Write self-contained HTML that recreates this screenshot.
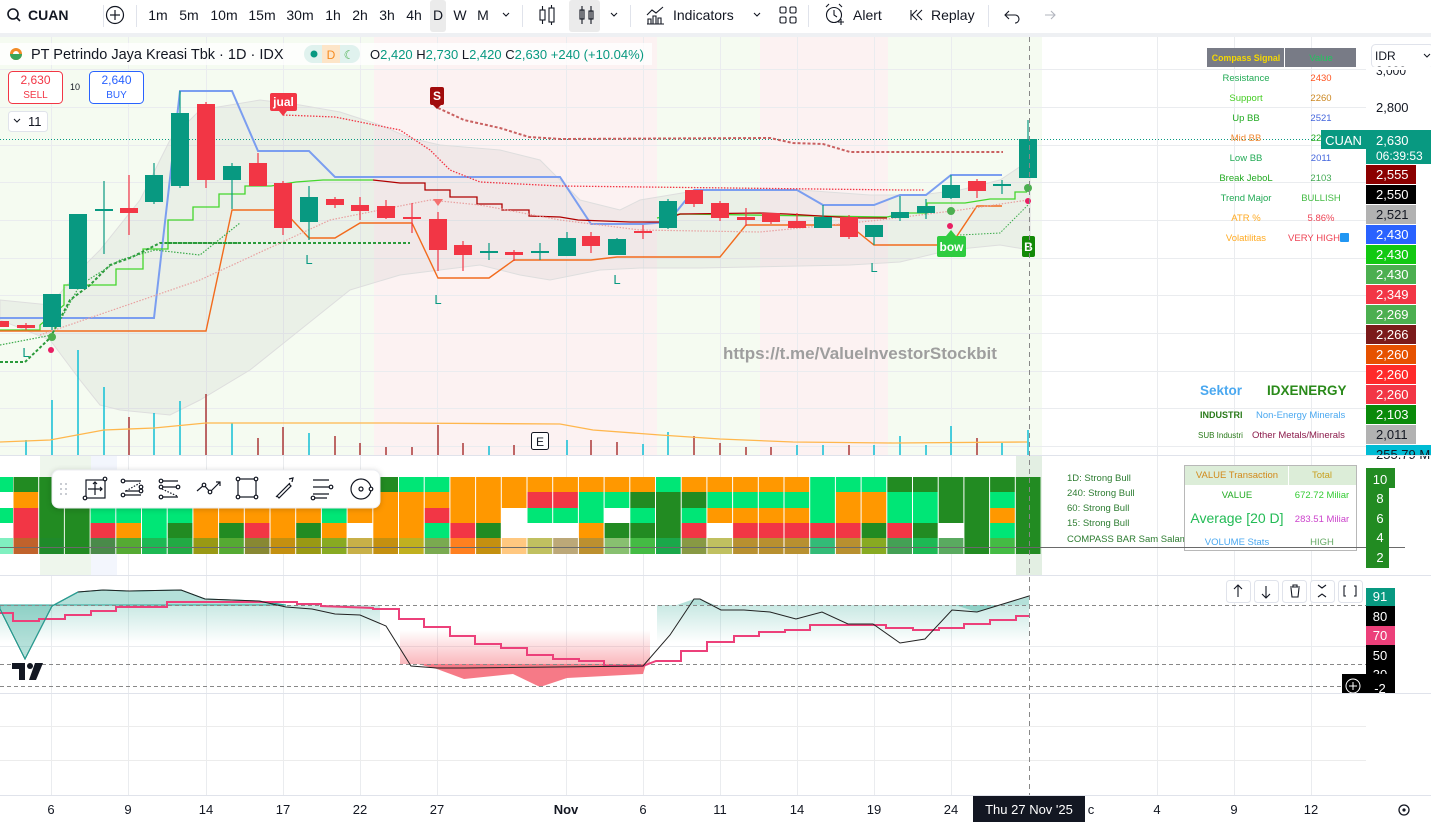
<!DOCTYPE html>
<html><head><meta charset="utf-8"><style>
*{margin:0;padding:0;box-sizing:border-box}
body{width:1431px;height:822px;overflow:hidden;background:#fff;font-family:"Liberation Sans",sans-serif;position:relative}
svg{position:absolute;left:0;top:0}
text{font-family:"Liberation Sans",sans-serif}
</style></head><body>
<svg id="s" width="1431" height="822" viewBox="0 0 1431 822" xmlns="http://www.w3.org/2000/svg">
<defs>
<linearGradient id="tg" x1="0" y1="0" x2="0" y2="1"><stop offset="0" stop-color="#089981" stop-opacity=".22"/><stop offset="1" stop-color="#089981" stop-opacity="0"/></linearGradient>
<linearGradient id="rg" x1="0" y1="1" x2="0" y2="0"><stop offset="0" stop-color="#f23645" stop-opacity=".35"/><stop offset="1" stop-color="#f23645" stop-opacity="0"/></linearGradient>
</defs>
<rect x="0" y="0" width="1431" height="33" fill="#fff"/>
<rect x="0" y="33" width="1431" height="4" fill="#eef0f3"/>
<g fill="none" stroke="#131722" stroke-width="1.6">
<circle cx="13" cy="14" r="5"/><line x1="16.5" y1="17.5" x2="20" y2="21"/>
<circle cx="115" cy="15" r="8.5" stroke-width="1.2"/><line x1="115" y1="10" x2="115" y2="20" stroke-width="1.2"/><line x1="110" y1="15" x2="120" y2="15" stroke-width="1.2"/>
</g>
<text x="28" y="20" font-size="14" font-weight="bold" fill="#131722">CUAN</text>
<g stroke="#e0e3eb"><line x1="103.5" y1="5" x2="103.5" y2="27"/><line x1="136.5" y1="5" x2="136.5" y2="27"/><line x1="522.5" y1="5" x2="522.5" y2="27"/><line x1="630.5" y1="5" x2="630.5" y2="27"/><line x1="808.5" y1="5" x2="808.5" y2="27"/><line x1="988.5" y1="5" x2="988.5" y2="27"/></g>
<rect x="430" y="0" width="16" height="32" rx="3" fill="#ebebeb"/>
<rect x="569" y="0" width="31" height="32" rx="3" fill="#ebebeb"/>
<g font-size="14" fill="#131722" text-anchor="middle">
<text x="158" y="20">1m</text><text x="189" y="20">5m</text><text x="224" y="20">10m</text><text x="262" y="20">15m</text><text x="300" y="20">30m</text><text x="333" y="20">1h</text><text x="360" y="20">2h</text><text x="387" y="20">3h</text><text x="414" y="20">4h</text><text x="438" y="20">D</text><text x="460" y="20">W</text><text x="483" y="20">M</text>
</g>
<g fill="none" stroke="#131722" stroke-width="1.1">
<path d="M503 13l3 3 3-3M611 13l3 3 3-3M754 13l3 3 3-3"/>
<rect x="540" y="10" width="5" height="10"/><line x1="542.5" y1="6" x2="542.5" y2="10"/><line x1="542.5" y1="20" x2="542.5" y2="24"/>
<rect x="549" y="8" width="5" height="14"/><line x1="551.5" y1="5" x2="551.5" y2="8"/><line x1="551.5" y1="22" x2="551.5" y2="25"/>
<rect x="580" y="10" width="4" height="9"/><line x1="582" y1="6" x2="582" y2="24"/><rect x="589" y="11" width="4" height="8"/><line x1="591" y1="6" x2="591" y2="24"/>
<path d="M647 24h17M648 24v-5h3v5M653 24v-8h3v8M658 24v-6h3v6M647 15l5-5 4 3 7-6"/>
<rect x="780" y="7" width="6" height="6" rx="1.5"/><rect x="790" y="7" width="6" height="6" rx="1.5"/><rect x="780" y="17" width="6" height="6" rx="1.5"/><rect x="790" y="17" width="6" height="6" rx="1.5"/>
<circle cx="834" cy="15" r="7.5"/><path d="M834 10v5l3 2M826 7l3-3M842 7l-3-3M838 22h6M841 19v6"/>
<path d="M917 10l-5 5 5 5M922 10l-5 5 5 5M911 10v10"/>
<path d="M1005 15h10a4 4 0 0 1 0 8M1009 11l-4 4 4 4"/>
</g>
<path d="M1055 15h-10M1051 11l4 4-4 4" fill="none" stroke="#b2b5be" stroke-width="1.1"/>
<g font-size="14" fill="#131722"><text x="673" y="20">Indicators</text><text x="853" y="20">Alert</text><text x="931" y="20">Replay</text></g>

<rect x="0" y="37" width="374" height="418" fill="#f5fbf1"/>
<rect x="374" y="37" width="283" height="418" fill="#fcf2f2"/>
<rect x="657" y="37" width="103" height="418" fill="#f5fbf1"/>
<rect x="760" y="37" width="128" height="418" fill="#fcf2f2"/>
<rect x="888" y="37" width="154" height="418" fill="#f5fbf1"/>
<g id="grid" stroke="#eaecef" stroke-width="1"></g>
<path d="M0 300L50 305 80 270 100 250 140 200 170 140 200 110 260 100 300 105 340 112 380 125 410 138 440 145 500 150 540 160 580 200 620 210 640 200 700 190 800 190 870 195 920 195 960 190 1000 180 1030 160L1030 250 1000 245 950 250 900 262 850 265 800 266 700 268 640 268 600 270 550 280 520 275 480 265 440 270 400 275 350 290 300 330 250 370 200 400 170 415 120 410 100 405 80 380 50 340 0 320Z" fill="rgba(120,120,120,.08)" stroke="#dedede"/>
<line x1="0" y1="139.5" x2="1320" y2="139.5" stroke="#089981" stroke-dasharray="1 2"/>
<g id="vol" stroke-width="1.4"></g>
<polyline points="0,442 50,440 104,430 154,428 206,423 286,423 393,423 560,424 593,430 660,435 720,439 793,442 893,443 1027,442" fill="none" stroke="#ffb74d" stroke-width="1.3"/>
<polyline points="0,318 154,318 180,91 232,91 258,151 309,151 335,177 560,177 591,224 643,224 668,222 694,190 797,190 823,205 874,205 900,195 926,195 951,175 1002,175" fill="none" stroke="#7b9ef0" stroke-width="2"/>
<polyline points="0,330 40,330 40,325 64,305 64,285 89,285 116,285 116,269 143,269 143,249 168,249 168,220 193,220 193,207 219,207 219,194 245,194 245,186 271,186 296,182 323,180 373,180" fill="none" stroke="#44d62c" stroke-width="1.3"/>
<polyline points="657,218 680,214 887,217 907,213 927,213 927,203 965,203 990,199 1015,199 1015,192 1027,192" fill="none" stroke="#44d62c" stroke-width="1.3"/>
<polyline points="373,180 400,183 425,183 425,190 450,190 450,197 477,197 477,204 502,204 502,210 529,210 529,216 560,217 578,220 630,222 660,222 680,214 760,213 787,214 837,217 860,218 887,218" fill="none" stroke="#b00000" stroke-width="1.3"/>
<polyline points="0,331 206,331 232,210 283,210 309,238 335,238 360,223 412,223 438,278 489,278 514,260 591,260 617,257 720,257 746,225 849,225 874,245 951,245 977,206 1002,206" fill="none" stroke="#f26b1d" stroke-width="1.4"/>
<polyline points="283,115 335,117 400,130 430,150 450,170 480,182 560,186 900,190 924,190" fill="none" stroke="#f23645" stroke-dasharray="1.5 1.5" stroke-width="1.3"/>
<polyline points="438,108 464,120 500,128 529,137 560,139 770,138 793,143 823,144 850,152 1003,152" fill="none" stroke="#c96060" stroke-dasharray="3 2" stroke-width="2"/>
<polyline points="0,362 25,362 50,338 70,300 90,285 110,265 130,258 160,243 240,243" fill="none" stroke="#2a9a3a" stroke-dasharray="3 2" stroke-width="2"/>
<polyline points="168,243 410,243" fill="none" stroke="#2a9a3a" stroke-dasharray="3 2" stroke-width="2"/>
<polyline points="0,345 52,335 80,285 120,260 155,250 200,255 240,223" fill="none" stroke="#3aaa4a" stroke-dasharray="1.5 1.5" stroke-width="1.2"/>
<polyline points="40,335 200,280 330,220 430,200 480,205 560,220 640,230 760,232 880,220 960,210 1028,200" fill="none" stroke="#e8a0a0" stroke-dasharray="1.5 1.5" stroke-width="1.2"/>
<polyline points="960,235 1000,233 1028,205" fill="none" stroke="#3aaa4a" stroke-dasharray="1.5 1.5"/>
<g id="cdl"></g>
<circle cx="1028" cy="188" r="4" fill="#4caf50"/><circle cx="951" cy="211" r="4" fill="#4caf50"/><circle cx="52" cy="337" r="4" fill="#4caf50"/>
<rect x="270" y="93" width="27" height="18" rx="2" fill="#f23645"/><path d="M279 111l4 5 4-5z" fill="#f23645"/><text x="283.5" y="106" font-size="12" font-weight="bold" fill="#fff" text-anchor="middle">jual</text>
<rect x="430" y="87" width="14" height="18" rx="2" fill="#a10c0c"/><path d="M433 105l4 4 4-4z" fill="#a10c0c"/><text x="437" y="100" font-size="12" font-weight="bold" fill="#fff" text-anchor="middle">S</text>
<path d="M433 199h10l-5 7z" fill="#f47070"/>
<rect x="937" y="236" width="29" height="21" rx="2" fill="#2ecc40"/><path d="M946 236l5-6 5 6z" fill="#2ecc40"/><text x="951.5" y="251" font-size="12" font-weight="bold" fill="#fff" text-anchor="middle">bow</text>
<rect x="1022" y="236" width="13" height="21" rx="2" fill="#138a07"/><text x="1028.5" y="251" font-size="12" font-weight="bold" fill="#fff" text-anchor="middle">B</text>
<g font-size="13" fill="#089981" text-anchor="middle"><text x="26" y="357">L</text><text x="309" y="264">L</text><text x="438" y="304">L</text><text x="617" y="284">L</text><text x="874" y="272">L</text></g>
<g fill="#e91e63"><circle cx="51" cy="350" r="3"/><circle cx="950" cy="226" r="3"/><circle cx="1028" cy="201" r="3"/></g>
<rect x="531.5" y="432.5" width="17" height="17" rx="2" fill="#fff" stroke="#131722"/><text x="540" y="446" font-size="12" fill="#131722" text-anchor="middle">E</text>
<text x="723" y="359" font-size="17" font-weight="bold" fill="#9e9e9e">https://t.me/ValueInvestorStockbit</text>
<rect x="0" y="43" width="652" height="22" fill="rgba(255,255,255,.75)"/>
<circle cx="16" cy="54" r="6" fill="#f28b27"/><circle cx="16" cy="54" r="3" fill="#fff"/><path d="M10 54a6 6 0 0 0 12 0" fill="#3aa55a"/>
<text x="31" y="59" font-size="14.5" fill="#131722">PT Petrindo Jaya Kreasi Tbk · 1D · IDX</text>
<rect x="304" y="45" width="56" height="18" rx="9" fill="#e0f2ee"/><rect x="322" y="45" width="18" height="18" fill="#fde5c8"/>
<circle cx="314" cy="54" r="3.5" fill="#089981"/><text x="331" y="59" font-size="12" fill="#f58a1f" text-anchor="middle">D</text><text x="349" y="59" font-size="12" fill="#4caf50" text-anchor="middle">☾</text>
<text x="370" y="59" font-size="13" fill="#089981"><tspan fill="#131722">O</tspan>2,420 <tspan fill="#131722">H</tspan>2,730 <tspan fill="#131722">L</tspan>2,420 <tspan fill="#131722">C</tspan>2,630 +240 (+10.04%)</text>
<rect x="8.5" y="71.5" width="54" height="32" rx="4" fill="#fff" stroke="#f23645"/><text x="35.5" y="84" font-size="12" fill="#f23645" text-anchor="middle">2,630</text><text x="35.5" y="98" font-size="10" fill="#f23645" text-anchor="middle">SELL</text>
<text x="75" y="90" font-size="9" fill="#131722" text-anchor="middle">10</text>
<rect x="89.5" y="71.5" width="54" height="32" rx="4" fill="#fff" stroke="#2962ff"/><text x="116.5" y="84" font-size="12" fill="#2962ff" text-anchor="middle">2,640</text><text x="116.5" y="98" font-size="10" fill="#2962ff" text-anchor="middle">BUY</text>
<rect x="8.5" y="111.5" width="39" height="20" rx="3" fill="#fff" stroke="#e0e3eb"/><path d="M14 119l3 3 3-3" fill="none" stroke="#131722"/><text x="28" y="126" font-size="13" fill="#131722">11</text>
<rect x="1207" y="48" width="77" height="19" fill="#787b86"/><rect x="1285" y="48" width="71" height="19" fill="#787b86"/>
<text x="1246" y="61" font-size="8.8" fill="#f5d800" text-anchor="middle" font-weight="bold">Compass Signal</text><text x="1321" y="61" font-size="9.5" fill="#22c55e" text-anchor="middle">Value</text>
<g font-size="9.5" text-anchor="middle">
<text x="1246" y="81" fill="#22aa55">Resistance</text><text x="1321" y="81" fill="#ff5522">2430</text>
<text x="1246" y="101" fill="#44cc22">Support</text><text x="1321" y="101" fill="#cc8822">2260</text>
<text x="1246" y="121" fill="#22aa22">Up BB</text><text x="1321" y="121" fill="#4466dd">2521</text>
<text x="1246" y="141" fill="#ee8833">Mid BB</text><text x="1316" y="141" fill="#22aa22">22</text>
<text x="1246" y="161" fill="#22aa55">Low BB</text><text x="1321" y="161" fill="#4466dd">2011</text>
<text x="1246" y="181" fill="#22aa22">Break JeboL</text><text x="1321" y="181" fill="#44aa55">2103</text>
<text x="1246" y="201" fill="#22aa55">Trend Major</text><text x="1321" y="201" fill="#44bb44">BULLISH</text>
<text x="1246" y="221" fill="#ffaa22">ATR %</text><text x="1321" y="221" fill="#ee4455">5.86%</text>
<text x="1246" y="241" fill="#ffaa22">Volatilitas</text><text x="1314" y="241" fill="#ee4455">VERY HIGH</text>
</g>
<rect x="1340" y="233" width="9" height="9" rx="1" fill="#2196f3"/>
<text x="1200" y="395" font-size="13.5" font-weight="bold" fill="#4aa8f0">Sektor</text>
<text x="1267" y="395" font-size="13.5" font-weight="bold" fill="#2a8a1a">IDXENERGY</text>
<text x="1200" y="418" font-size="9" font-weight="bold" fill="#2a7a1a">INDUSTRI</text><text x="1256" y="418" font-size="9.5" fill="#4aa8f0">Non-Energy Minerals</text>
<text x="1198" y="438" font-size="8" fill="#2a7a1a">SUB Industri</text><text x="1252" y="438" font-size="9.5" fill="#8b1a4a">Other Metals/Minerals</text>
<rect x="1366" y="37" width="65" height="418" fill="#fff"/>
<rect x="1371.5" y="44.5" width="62" height="23" rx="4" fill="#fff" stroke="#e0e3eb"/><text x="1375" y="60" font-size="12" fill="#131722">IDR</text><path d="M1424 54l3 3 3-3" fill="none" stroke="#131722"/>
<text x="1376" y="75" font-size="12" fill="#131722">3,000</text>
<rect x="1366" y="67" width="65" height="3" fill="#fff"/>
<text x="1376" y="112" font-size="13" fill="#131722">2,800</text>
<rect x="1321" y="130" width="45" height="19" fill="#089981"/><text x="1343.5" y="145" font-size="13" fill="#fff" text-anchor="middle">CUAN</text>
<rect x="1366" y="130" width="65" height="34" fill="#089981"/><text x="1376" y="145" font-size="13" fill="#fff">2,630</text><text x="1376" y="160" font-size="12" fill="#fff">06:39:53</text>
<g id="pl" font-size="13"></g>
<line x1="0" y1="455.5" x2="1431" y2="455.5" stroke="#e0e3eb"/>
<rect x="1016" y="456" width="26" height="119" fill="#e3efe3"/>
<rect x="40" y="456" width="51" height="119" fill="#eef6ec"/><rect x="91" y="456" width="26" height="119" fill="#f3f6fd"/>
<g id="cb"></g>
<line x1="0" y1="547.5" x2="1405" y2="547.5" stroke="#6a6a6a"/>
<g font-size="9.5" fill="#2e7d32"><text x="1067" y="481">1D: Strong Bull</text><text x="1067" y="496">240: Strong Bull</text><text x="1067" y="511">60: Strong Bull</text><text x="1067" y="526">15: Strong Bull</text><text x="1067" y="542">COMPASS BAR Sam Salamun</text></g>
<rect x="1184.5" y="465.5" width="172" height="85" fill="#fff" stroke="#b8b8b8"/>
<rect x="1185" y="466" width="103" height="19" fill="#dcedd8"/><rect x="1289" y="466" width="67" height="19" fill="#dcedd8"/>
<g font-size="9.5" text-anchor="middle">
<text x="1237" y="478" fill="#d2891a">VALUE Transaction</text><text x="1322" y="478" fill="#c8a020">Total</text>
<text x="1237" y="498" fill="#22aa22">VALUE</text><text x="1322" y="498" fill="#33cc33">672.72 Miliar</text>
<text x="1237" y="523" font-size="14" fill="#22bb55">Average [20 D]</text><text x="1322" y="522" fill="#cc44cc">283.51 Miliar</text>
<text x="1237" y="545" fill="#4aa8f0">VOLUME Stats</text><text x="1322" y="545" fill="#66aa66">HIGH</text>
</g>
<line x1="1184" y1="547.5" x2="1405" y2="547.5" stroke="#6a6a6a"/>
<g font-size="13" fill="#fff" text-anchor="middle">
<rect x="1366" y="468" width="29" height="20" fill="#228b22"/><text x="1380" y="484">10</text>
<rect x="1366" y="488" width="23" height="80" fill="#228b22"/>
<text x="1380" y="503">8</text><text x="1380" y="523">6</text><text x="1380" y="542">4</text><text x="1380" y="562">2</text>
</g>
<rect x="52" y="470" width="328" height="38" rx="7" fill="#fff" stroke="#eceef2" style="filter:drop-shadow(0 1px 3px rgba(0,0,0,.18))"/>
<g fill="#b8bcc4"><circle cx="61" cy="484" r="1"/><circle cx="66" cy="484" r="1"/><circle cx="61" cy="489" r="1"/><circle cx="66" cy="489" r="1"/><circle cx="61" cy="494" r="1"/><circle cx="66" cy="494" r="1"/></g>
<g fill="none" stroke="#131722" stroke-width="1.2">
<rect x="86" y="480" width="19" height="18"/><path d="M95 482v13M88 489h14M93 484l2-2 2 2M100 487l2 2-2 2"/><circle cx="85" cy="498" r="1.8" fill="#fff"/><circle cx="105" cy="479" r="1.8" fill="#fff"/>
<path d="M124 481h17M124 495h17M125 491h16" /><path d="M126 491l14-8" stroke-dasharray="1.5 1.5"/><circle cx="123" cy="481" r="1.8" fill="#fff"/><circle cx="141" cy="487" r="1.8" fill="#fff"/><circle cx="123" cy="495" r="1.8" fill="#fff"/><circle cx="141" cy="491" r="1.8" fill="#fff"/>
<path d="M161 481h17M161 487h17M161 497h17"/><path d="M162 489l15 7" stroke-dasharray="1.5 1.5"/><circle cx="161" cy="481" r="1.8" fill="#fff"/><circle cx="178" cy="487" r="1.8" fill="#fff"/><circle cx="161" cy="487" r="1.8" fill="#fff"/><circle cx="161" cy="497" r="1.8" fill="#fff"/>
<path d="M197 491l7-6 6 7 10-10M216 482h4v4"/><circle cx="204" cy="485" r="1.8" fill="#fff"/><circle cx="210" cy="492" r="1.8" fill="#fff"/>
<rect x="238" y="479" width="18" height="18"/><circle cx="238" cy="479" r="1.8" fill="#fff"/><circle cx="256" cy="479" r="1.8" fill="#fff"/><circle cx="238" cy="497" r="1.8" fill="#fff"/><circle cx="256" cy="497" r="1.8" fill="#fff"/>
<path d="M276 497l14-14M289 479l4-1-1 4M277 496l2 2 12-12-2-2z"/>
<path d="M313 480h16M313 487h16M313 494h16M313 498h14"/><circle cx="331" cy="487" r="1.8" fill="#fff"/><circle cx="313" cy="498" r="1.8" fill="#fff"/>
<circle cx="361" cy="489" r="10"/><circle cx="361" cy="489" r="2"/><circle cx="371" cy="489" r="1.8" fill="#fff"/>
</g>
<line x1="0" y1="575.5" x2="1431" y2="575.5" stroke="#e0e3eb"/>
<g stroke="#eaecef"><line x1="0" y1="646.5" x2="1366" y2="646.5"/></g>
<rect x="0" y="605" width="380" height="38" fill="url(#tg)"/><rect x="657" y="605" width="372" height="38" fill="url(#tg)"/>
<rect x="400" y="630" width="250" height="34" fill="url(#rg)"/>
<path d="M0 605L0 609 25 659 52 606 78 592 103 590 129 591 181 590 205 599 259 601 286 605Z" fill="#089981" fill-opacity=".3" stroke="#26a69a" stroke-width="1"/>
<path d="M677 605L694 599 700 599 715 605Z" fill="#089981" fill-opacity=".3"/>
<path d="M955 605L977 612 1029 596 1029 605Z" fill="#089981" fill-opacity=".3"/>
<path d="M437 669L464 679 513 674 540 687 567 678 643 674 646 664 418 664Z" fill="#f56b7a" fill-opacity=".9"/>
<g stroke="#888" stroke-dasharray="4 3"><line x1="0" y1="605.5" x2="1366" y2="605.5"/><line x1="0" y1="664.5" x2="1366" y2="664.5"/><line x1="0" y1="686.5" x2="1366" y2="686.5"/></g>
<polyline points="0,613 13,613 13,621 39,621 39,619 65,619 65,615 91,615 91,611 116,611 116,607 167,607 167,602 297,602 297,604 321,604 321,606 373,608 373,609 399,609 399,619 424,619 424,627 450,627 450,636 475,636 475,644 501,644 501,648 527,648 527,655 553,655 553,659 579,659 579,661 604,661 604,666 643,666 656,661 681,661 681,651 707,651 707,642 734,642 734,636 759,636 759,632 785,632 785,630 810,630 810,625 886,625 886,628 913,628 913,630 939,630 939,628 964,628 964,624 990,624 990,620 1016,620 1016,616 1029,616" fill="none" stroke="#ec407a" stroke-width="2"/>
<polyline points="0,609 25,659 52,606 78,592 103,590 129,591 181,590 205,599 259,601 286,607 312,609 335,614 360,615 386,626 411,666 437,668 464,668 643,666 670,635 694,599 700,599 721,610 744,610 770,612 796,619 822,612 848,624 873,624 900,643 925,639 952,610 977,612 1029,596" fill="none" stroke="#222" stroke-width="1"/>
<polyline points="0,609 25,659 52,606 78,592" fill="none" stroke="#26a69a"/>
<g fill="#131722"><path d="M12 663h13v17h-6v-11h-7z"/><circle cx="30" cy="666" r="3"/><path d="M35 663h8l-7 17h-7z"/></g>
<g fill="#fff" stroke="#e0e3eb"><rect x="1226.5" y="580.5" width="24" height="22" rx="3"/><rect x="1254.5" y="580.5" width="24" height="22" rx="3"/><rect x="1282.5" y="580.5" width="24" height="22" rx="3"/><rect x="1310.5" y="580.5" width="24" height="22" rx="3"/><rect x="1338.5" y="580.5" width="24" height="22" rx="3"/></g>
<g fill="none" stroke="#131722" stroke-width="1.1"><path d="M1238 597v-11M1234 589l4-4 4 4M1266 586v11M1262 594l4 4 4-4M1290 587h10M1293 587v-2h4v2M1291 588l1 9h6l1-9M1318 585l4 3 4-3M1318 597l4-3 4 3M1346 586h-2v10h2M1354 586h2v10h-2"/></g>
<rect x="1366" y="588" width="29" height="18" fill="#089981"/><text x="1380" y="601" font-size="13" fill="#fff" text-anchor="middle">91</text>
<rect x="1366" y="606" width="29" height="20" fill="#000"/><text x="1380" y="621" font-size="13" fill="#fff" text-anchor="middle">80</text>
<rect x="1366" y="626" width="29" height="19" fill="#ec407a"/><text x="1380" y="640" font-size="13" fill="#fff" text-anchor="middle">70</text>
<rect x="1366" y="645" width="29" height="48" fill="#000"/><text x="1380" y="660" font-size="13" fill="#fff" text-anchor="middle">50</text><text x="1380" y="679" font-size="13" fill="#fff" text-anchor="middle">30</text>
<rect x="1342" y="674" width="53" height="19" fill="#000"/><text x="1380" y="693" font-size="13" fill="#fff" text-anchor="middle">-2</text>
<circle cx="1353" cy="686" r="7" fill="none" stroke="#fff"/><path d="M1353 682v8M1349 686h8" stroke="#fff"/>
<line x1="0" y1="693.5" x2="1431" y2="693.5" stroke="#e0e3eb"/>
<line x1="0" y1="726.5" x2="1366" y2="726.5" stroke="#ececec"/><line x1="0" y1="760.5" x2="1366" y2="760.5" stroke="#ececec"/>
<line x1="0" y1="795.5" x2="1431" y2="795.5" stroke="#e0e3eb"/>
<line x1="1029.5" y1="37" x2="1029.5" y2="795" stroke="#888" stroke-dasharray="5 4"/>
<g font-size="13" fill="#131722" text-anchor="middle">
<text x="51" y="814">6</text><text x="128" y="814">9</text><text x="206" y="814">14</text><text x="283" y="814">17</text><text x="360" y="814">22</text><text x="437" y="814">27</text><text x="566" y="814" font-weight="bold">Nov</text><text x="643" y="814">6</text><text x="720" y="814">11</text><text x="797" y="814">14</text><text x="874" y="814">19</text><text x="951" y="814">24</text><text x="1091" y="814">c</text><text x="1157" y="814">4</text><text x="1234" y="814">9</text><text x="1311" y="814">12</text>
</g>
<rect x="973" y="796" width="112" height="26" fill="#131722"/><text x="1029" y="814" font-size="13" fill="#fff" text-anchor="middle">Thu 27 Nov '25</text>
<circle cx="1404" cy="810" r="5" fill="none" stroke="#131722" stroke-width="1.3"/><circle cx="1404" cy="810" r="1.6" fill="#131722"/>
</svg>
<script>
var NS="http://www.w3.org/2000/svg",S=document.getElementById('s');
function el(p,t,a){var e=document.createElementNS(NS,t);for(var k in a)e.setAttribute(k,a[k]);p.appendChild(e);return e;}
var g=document.getElementById('grid');
[51,128,206,283,360,437,566,643,720,797,874,951,1157,1234,1311].forEach(function(x){el(g,'line',{x1:x+.5,y1:37,x2:x+.5,y2:795});});
[69,107,145,182,220,258,295,333,371,408,446].forEach(function(y){el(g,'line',{x1:0,y1:y+.5,x2:1366,y2:y+.5});});
var C=[[26,325,328,323,330,0],[52,294,327,294,330,1],[78,214,289,214,289,1],[104,209,211,181,254,1],[129,208,213,175,235,0],[154,175,202,163,204,1],[180,113,186,91,188,1],[206,104,180,102,188,0],[232,166,180,163,209,1],[258,163,186,153,186,0],[283,183,228,181,235,0],[309,197,222,186,240,1],[335,199,205,197,208,0],[360,205,211,197,220,0],[386,206,218,200,219,0],[412,217,219,203,233,0],[438,219,250,212,271,0],[463,245,255,241,271,0],[489,251,253,243,260,1],[514,252,255,250,261,0],[540,251,253,243,260,1],[567,238,256,232,256,1],[591,236,246,232,253,0],[617,239,255,238,255,1],[643,231,233,225,239,0],[668,201,228,199,229,1],[694,190,204,190,207,0],[720,203,218,201,221,0],[746,217,220,208,226,0],[771,213,222,213,224,0],[797,221,228,213,228,0],[823,217,228,205,228,1],[849,217,237,215,239,0],[874,225,237,225,245,1],[900,212,218,196,221,1],[926,206,213,199,219,1],[951,185,198,175,199,1],[977,181,191,179,198,0],[1002,184,186,180,194,1],[1028,139,178,120,178,1]];
var cg=document.getElementById('cdl');
el(cg,'rect',{x:0,y:321,width:9,height:6,fill:'#f23645'});
C.forEach(function(c){var col=c[5]?'#089981':'#f23645';el(cg,'line',{x1:c[0],y1:c[3],x2:c[0],y2:c[4],stroke:col,'stroke-width':1.2});el(cg,'rect',{x:c[0]-9,y:c[1],width:18,height:Math.max(2,c[2]-c[1]),fill:col});});
var V=[[26,440,1],[52,400,1],[78,350,1],[104,387,1],[129,417,0],[154,413,1],[180,401,1],[206,394,0],[232,423,1],[258,438,0],[283,427,0],[309,433,1],[335,436,0],[360,443,0],[386,447,0],[412,447,0],[438,425,0],[463,443,0],[489,446,1],[514,445,0],[567,440,1],[591,440,0],[617,442,0],[643,444,1],[668,432,1],[694,436,0],[720,443,0],[746,447,0],[771,447,0],[797,445,1],[823,445,1],[849,445,0],[874,445,1],[900,436,1],[926,445,1],[951,426,1],[977,438,0],[1002,443,1],[1028,430,1]];
var vg=document.getElementById('vol');
V.forEach(function(v){el(vg,'line',{x1:v[0],y1:v[1],x2:v[0],y2:455,stroke:v[2]?'#00bcd4':'#a52a2a'});});
var P=[['2,555','#8b0000','#fff'],['2,550','#000','#fff'],['2,521','#b2b2b2','#131722'],['2,430','#2962ff','#fff'],['2,430','#12c912','#fff'],['2,430','#4caf50','#fff'],['2,349','#f23645','#fff'],['2,269','#4caf50','#fff'],['2,266','#7b1a1a','#fff'],['2,260','#e65100','#fff'],['2,260','#ff2a2a','#fff'],['2,260','#f23645','#fff'],['2,103','#0a8a0a','#fff'],['2,011','#b2b2b2','#131722']];
var pg=document.getElementById('pl');
P.forEach(function(p,i){var y=165+i*20;el(pg,'rect',{x:1366,y:y,width:50,height:19,fill:p[1]});var t=el(pg,'text',{x:1376,y:y+14,fill:p[2]});t.textContent=p[0];});
el(pg,'rect',{x:1366,y:445,width:65,height:10,fill:'#00bcd4'});
var vt=el(pg,'text',{x:1376,y:459,fill:'#131722'});vt.textContent='255.79 M';
var cols={G:'#00e676',D:'#228b22',O:'#ff9800',R:'#f23645',W:'#ffffff'};
var CB=['DORR#c0622c','DDDD#1f8a2a','DDDD#228b22','GGGR#4a8a4a','GGGO#55aa33','GGGG#1db954','GGGD#22aa44','OOOO#999914','OOOD#55aa33','OOOR#888833','OOOO#c49010','OOOD#999914','GGGO#88aa22','DOOW#c8b048','DOOO#c49010','GOOO#c0b020','GORG#7aaa50','OOOR#ff8020','OOOD#c49010','OOWW#ffc880','ORGW#c0c060','ORGW#bca878','OGGO#bc9030','OGWD#88c070','ODGD#44bb44','GDDD#1aa84a','ODGR#889944','OGOW#c0c060','OGOR#b89030','OGOR#b89030','OGOR#b89030','GGGR#33bb77','GOOR#b89030','GOOD#88aa22','DGGR#44a055','DGGD#1db954','DDDW#5aaa60','DDDD#228b22','DGOG#44bb44','DDDD#228b22'];
var cb=document.getElementById('cb'),RY=[477,492,508,523,538,554];
function cell(x,w,r,f){el(cb,'rect',{x:x,y:RY[r],width:w,height:RY[r+1]-RY[r],fill:f});}
['G','W','G','W'].forEach(function(k,r){cell(0,13,r,cols[k]);});cell(0,13,4,'#80f0c0');
CB.forEach(function(s,k){var x=13.5+25.7*k;for(var r=0;r<4;r++)cell(x,24.7,r,cols[s[r]]);cell(x,24.7,4,s.slice(4));});
</script>
</body></html>
